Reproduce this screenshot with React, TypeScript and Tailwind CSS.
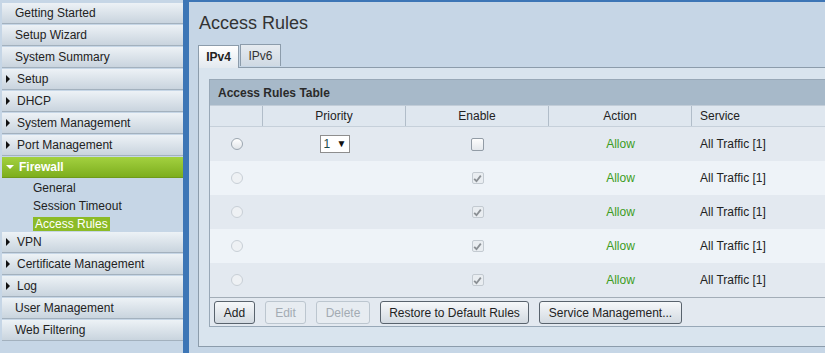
import React from 'react'

type NavItem = {
  label: string
  arrow?: boolean
}

const topItems: NavItem[] = [
  { label: 'Getting Started' },
  { label: 'Setup Wizard' },
  { label: 'System Summary' },
  { label: 'Setup', arrow: true },
  { label: 'DHCP', arrow: true },
  { label: 'System Management', arrow: true },
  { label: 'Port Management', arrow: true },
]

const bottomItems: NavItem[] = [
  { label: 'VPN', arrow: true },
  { label: 'Certificate Management', arrow: true },
  { label: 'Log', arrow: true },
  { label: 'User Management' },
  { label: 'Web Filtering' },
]

const rules = [
  { first: true },
  { first: false },
  { first: false },
  { first: false },
  { first: false },
]

const NavRow = ({ label, arrow }: NavItem) => (
  <div className="h-[21px] mb-px flex items-center bg-gradient-to-b from-[#edf2f6] to-[#c9d4de] border-b border-[#a3b1be] text-[12px] text-[#222]">
    {arrow ? (
      <>
        <span className="ml-[4px] w-0 h-0 border-y-[4px] border-y-transparent border-l-[4px] border-l-[#111]" />
        <span className="ml-[7px]">{label}</span>
      </>
    ) : (
      <span className="ml-[13px]">{label}</span>
    )}
  </div>
)

const Check = ({ color }: { color: string }) => (
  <svg width="9" height="9" viewBox="0 0 9 9">
    <path d="M1.2 4.8 L3.5 7.2 L7.8 1.6" fill="none" stroke={color} strokeWidth="1.8" />
  </svg>
)

const Btn = ({ label, w, disabled }: { label: string; w: string; disabled?: boolean }) => (
  <div
    className={
      disabled
        ? `${w} h-[23px] flex items-center justify-center rounded-[3px] border border-[#bcc6cf] bg-[#e7ecf1] text-[#a3abb3]`
        : `${w} h-[23px] flex items-center justify-center rounded-[3px] border border-[#59636d] bg-gradient-to-b from-[#f6f8fa] to-[#d3dae1] text-[#222]`
    }
  >
    {label}
  </div>
)

export default function App() {
  return (
    <div
      className="w-[825px] h-[353px] overflow-hidden flex bg-[#c6d6e6]"
      style={{ fontFamily: '"Liberation Sans", Arial, sans-serif' }}
    >
      {/* sidebar */}
      <div className="w-[183px] shrink-0 pt-[3px] pl-[2px] bg-[#c6d6e6]">
        {topItems.map((it) => (
          <NavRow key={it.label} {...it} />
        ))}
        <div className="h-[21px] mb-px flex items-center bg-gradient-to-b from-[#a3d13f] to-[#7dae1c] border-b border-[#6f9a1a] text-[12px] font-bold text-white">
          <span className="ml-[4px] w-0 h-0 border-x-[4px] border-x-transparent border-t-[4px] border-t-white" />
          <span className="ml-[5px]">Firewall</span>
        </div>
        <div className="text-[12px] text-[#222]">
          <div className="h-[18px] flex items-center pl-[31px]">General</div>
          <div className="h-[18px] flex items-center pl-[31px]">Session Timeout</div>
          <div className="h-[17px] flex items-center pl-[31px]">
            <span className="bg-[#8cbb27] text-white px-[2px] leading-[14px]">Access Rules</span>
          </div>
        </div>
        {bottomItems.map((it) => (
          <NavRow key={it.label} {...it} />
        ))}
      </div>

      {/* divider stripe */}
      <div className="w-[6px] shrink-0 bg-[#3d76b6]" />

      {/* content */}
      <div className="flex-1 min-w-0 border-t-2 border-[#3d76b6] text-[12px] text-[#222]">
        <h1 className="pl-[10px] pt-[11px] text-[18px] leading-[20px] text-[#333]">Access Rules</h1>

        <div className="pl-[9px] mt-[11px] flex items-end">
          <div className="relative z-10 -mb-px w-[41px] h-[23px] flex items-center justify-center border border-b-0 border-[#8c9cab] bg-gradient-to-b from-[#ffffff] to-[#e3e9ef] font-bold">
            IPv4
          </div>
          <div className="ml-[1px] w-[41px] h-[22px] flex items-center justify-center border border-b-0 border-[#8c9cab] bg-gradient-to-b from-[#e6ebf0] to-[#cfd9e3] text-[#333] mb-[1px]">
            IPv6
          </div>
        </div>

        <div className="ml-[9px] w-[720px] border border-[#8c9cab] bg-[#d9e4ee] pl-[10px] pt-[11px] pb-[19px]">
          <div className="w-[700px] border border-[#98a8b7] bg-[#e3e9f0]">
            <div className="h-[26px] flex items-center pl-[8px] bg-[#a7b9c9] border-b border-[#c2cdd8] font-bold text-[#2a2a2a]">
              Access Rules Table
            </div>
            <div className="h-[21px] flex bg-[#dfe7ef] border-b border-[#c6d0da]">
              <div className="w-[53px] border-r border-[#b1bdc9]" />
              <div className="w-[143px] border-r border-[#b1bdc9] flex items-center justify-center">Priority</div>
              <div className="w-[143px] border-r border-[#b1bdc9] flex items-center justify-center">Enable</div>
              <div className="w-[143px] border-r border-[#b1bdc9] flex items-center justify-center">Action</div>
              <div className="flex-1 flex items-center pl-[8px]">Service</div>
            </div>

            {rules.map((r, i) => (
              <div
                key={i}
                className={`h-[34px] flex items-center ${i % 2 === 0 ? 'bg-[#e3e9f0]' : 'bg-[#eef3f8]'}`}
              >
                <div className="w-[53px] flex justify-center">
                  <span
                    className={
                      r.first
                        ? 'w-[12px] h-[12px] rounded-full border border-[#9ca6b0] bg-gradient-to-b from-[#ffffff] to-[#e1e5e9]'
                        : 'w-[12px] h-[12px] rounded-full border border-[#c8cfd6] bg-[#eef1f4]'
                    }
                  />
                </div>
                <div className="w-[143px] flex justify-center">
                  {r.first && (
                    <div className="w-[30px] h-[18px] bg-white border border-[#8e8e8e] flex items-center justify-between pl-[3px] pr-[2px]">
                      <span className="text-[12px] text-[#1b4a4a]">1</span>
                      <span className="text-[10px] leading-[10px] text-[#111]">▼</span>
                    </div>
                  )}
                </div>
                <div className="w-[143px] flex justify-center">
                  {r.first ? (
                    <span className="w-[13px] h-[13px] rounded-[2px] border border-[#929ca6] bg-gradient-to-b from-[#fdfdfd] to-[#e4e8ec]" />
                  ) : (
                    <span className="w-[12px] h-[12px] rounded-[2px] border border-[#c3cad1] bg-[#e9edf1] flex items-center justify-center">
                      <Check color="#8a8f94" />
                    </span>
                  )}
                </div>
                <div className="w-[143px] flex justify-center text-[#3c9c22]">Allow</div>
                <div className="flex-1 pl-[8px]">All Traffic [1]</div>
              </div>
            ))}

            <div className="h-[29px] border-t border-[#a3adb7] bg-[#e3e9f0] pl-[4px] pt-[3px] flex gap-[10px]">
              <Btn label="Add" w="w-[41px]" />
              <Btn label="Edit" w="w-[41px]" disabled />
              <Btn label="Delete" w="w-[54px]" disabled />
              <Btn label="Restore to Default Rules" w="w-[149px]" />
              <Btn label="Service Management..." w="w-[143px]" />
            </div>
          </div>
        </div>
      </div>
    </div>
  )
}
